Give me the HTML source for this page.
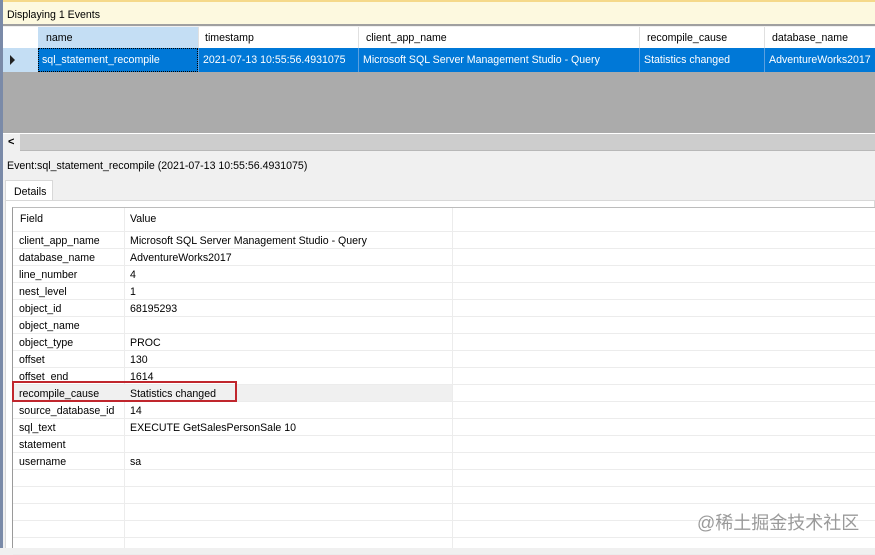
<!DOCTYPE html>
<html><head><style>
body{margin:0;width:875px;height:548px;overflow:hidden;background:#f0f0f0;font-family:"Liberation Sans",Arial,sans-serif;font-size:10.6px;color:#000;position:relative}
div{box-sizing:border-box}
.a{position:absolute}
.r{position:absolute;left:13px;right:0;height:17px;border-bottom:1px solid #ececec}
.r span{position:absolute;top:3px}
</style></head><body>
<div class="a" style="left:0;top:0;width:875px;height:2px;background:#f5d98a"></div>
<div class="a" style="left:0;top:2px;width:875px;height:24px;background:#fdf9df;border-bottom:2px solid #a0a0a0;padding:7px 0 0 7px">Displaying 1 Events</div>
<div class="a" style="left:0;top:0;width:3px;height:548px;background:#7a8aa8"></div>
<div class="a" style="left:3px;top:27px;width:872px;height:21px;background:#fff"></div>
<div class="a" style="left:38px;top:27px;width:160px;height:21px;background:#c4def4;padding:5px 0 0 8px">name</div>
<div class="a" style="left:198px;top:27px;width:160px;height:21px;border-left:1px solid #e0e0e0;padding:5px 0 0 6px">timestamp</div>
<div class="a" style="left:358px;top:27px;width:281px;height:21px;border-left:1px solid #e0e0e0;padding:5px 0 0 7px">client_app_name</div>
<div class="a" style="left:639px;top:27px;width:125px;height:21px;border-left:1px solid #e0e0e0;padding:5px 0 0 7px">recompile_cause</div>
<div class="a" style="left:764px;top:27px;width:111px;height:21px;border-left:1px solid #e0e0e0;padding:5px 0 0 7px">database_name</div>
<div class="a" style="left:3px;top:48px;width:35px;height:24px;background:#c4def4"></div>
<div class="a" style="left:10px;top:55px;width:0;height:0;border-left:5px solid #222;border-top:5px solid transparent;border-bottom:5px solid transparent"></div>
<div class="a" style="left:38px;top:48px;width:837px;height:24px;background:#0078d7;color:#fff"></div>
<div class="a" style="left:38px;top:48px;width:160px;height:24px;border:1px dotted #000;color:#fff;padding:5px 0 0 3px">sql_statement_recompile</div>
<div class="a" style="left:198px;top:48px;width:160px;height:24px;border-left:1px solid #5aa0e0;color:#fff;padding:6px 0 0 4px">2021-07-13 10:55:56.4931075</div>
<div class="a" style="left:358px;top:48px;width:281px;height:24px;border-left:1px solid #5aa0e0;color:#fff;padding:6px 0 0 4px">Microsoft SQL Server Management Studio - Query</div>
<div class="a" style="left:639px;top:48px;width:125px;height:24px;border-left:1px solid #5aa0e0;color:#fff;padding:6px 0 0 4px">Statistics changed</div>
<div class="a" style="left:764px;top:48px;width:111px;height:24px;border-left:1px solid #5aa0e0;color:#fff;padding:6px 0 0 4px">AdventureWorks2017</div>
<div class="a" style="left:3px;top:72px;width:872px;height:62px;background:#ababab;border-bottom:1px solid #fff"></div>
<div class="a" style="left:3px;top:134px;width:872px;height:17px;background:#cdcdcd;border-bottom:1px solid #b8b8b8"></div>
<div class="a" style="left:3px;top:134px;width:17px;height:17px;background:#f0f0f0;font-weight:bold;padding:2px 0 0 5px;font-size:11px">&lt;</div>
<div class="a" style="left:7px;top:160px">Event:sql_statement_recompile (2021-07-13 10:55:56.4931075)</div>
<div class="a" style="left:5px;top:180px;width:48px;height:21px;background:#fff;border:1px solid #d8d8d8;border-bottom:none;padding:5px 0 0 8px">Details</div>
<div class="a" style="left:5px;top:200px;width:870px;height:348px;background:#fff;border:1px solid #d8d8d8;border-bottom:none"></div>
<div class="a" style="left:12px;top:207px;width:863px;height:341px;background:#fff;border-left:1px solid #9a9a9a;border-top:1px solid #bcbcbc"></div>
<div class="a" style="left:124px;top:208px;width:1px;height:340px;background:#ececec"></div>
<div class="a" style="left:452px;top:208px;width:1px;height:340px;background:#ececec"></div>
<div class="r" style="top:208px;height:24px"><span style="left:7px;top:5px">Field</span><span style="left:117px;top:5px">Value</span></div>
<div class="a" style="left:13px;top:385px;width:439px;height:17px;background:#f0f0f0"></div>
<div class="r" style="top:232px"><span style="left:6px">client_app_name</span><span style="left:117px">Microsoft SQL Server Management Studio - Query</span></div>
<div class="r" style="top:249px"><span style="left:6px">database_name</span><span style="left:117px">AdventureWorks2017</span></div>
<div class="r" style="top:266px"><span style="left:6px">line_number</span><span style="left:117px">4</span></div>
<div class="r" style="top:283px"><span style="left:6px">nest_level</span><span style="left:117px">1</span></div>
<div class="r" style="top:300px"><span style="left:6px">object_id</span><span style="left:117px">68195293</span></div>
<div class="r" style="top:317px"><span style="left:6px">object_name</span></div>
<div class="r" style="top:334px"><span style="left:6px">object_type</span><span style="left:117px">PROC</span></div>
<div class="r" style="top:351px"><span style="left:6px">offset</span><span style="left:117px">130</span></div>
<div class="r" style="top:368px"><span style="left:6px">offset_end</span><span style="left:117px">1614</span></div>
<div class="r" style="top:385px"><span style="left:6px">recompile_cause</span><span style="left:117px">Statistics changed</span></div>
<div class="r" style="top:402px"><span style="left:6px">source_database_id</span><span style="left:117px">14</span></div>
<div class="r" style="top:419px"><span style="left:6px">sql_text</span><span style="left:117px">EXECUTE GetSalesPersonSale 10</span></div>
<div class="r" style="top:436px"><span style="left:6px">statement</span></div>
<div class="r" style="top:453px"><span style="left:6px">username</span><span style="left:117px">sa</span></div>
<div class="r" style="top:470px"></div><div class="r" style="top:487px"></div><div class="r" style="top:504px"></div><div class="r" style="top:521px"></div><div class="r" style="top:538px"></div>
<div class="a" style="left:12px;top:381px;width:225px;height:21px;border:2px solid #c0262d"></div>
<div class="a" style="left:697px;top:509px;font-family:'Liberation Sans','Noto Sans CJK SC',sans-serif;font-size:18px;color:#9a9a9a">@稀土掘金技术社区</div>
</body></html>
